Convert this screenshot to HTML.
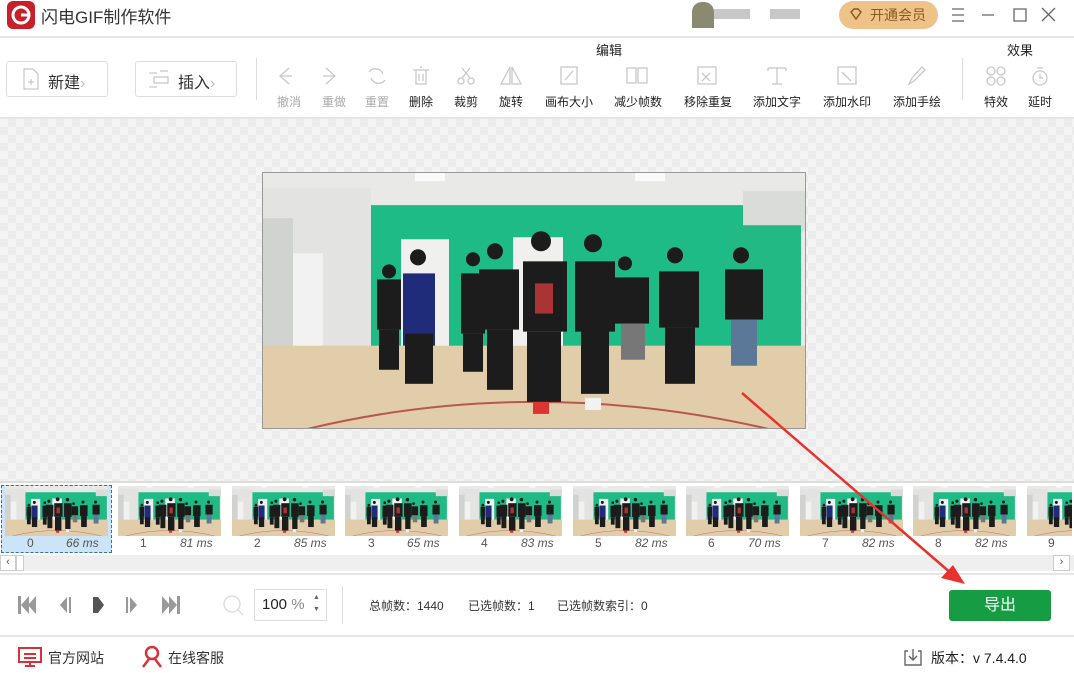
<!DOCTYPE html><html><head><meta charset="utf-8"><style>
*{margin:0;padding:0;box-sizing:border-box}
body{width:1074px;height:673px;overflow:hidden;background:#fff;font-family:"Liberation Sans","Noto Sans CJK SC",sans-serif;position:relative;color:#333}
.a{position:absolute}
.t{position:absolute;font-size:12px;white-space:nowrap;transform:translateX(-50%);color:#222}
.g{color:#aaa}
.th{position:absolute;top:486px;width:103px;height:50px}
.lb{position:absolute;top:536px;font-size:12px;color:#555}
.lb i{font-style:italic}
</style></head><body>
<svg width="0" height="0" style="position:absolute"><defs>
<symbol id="sc" viewBox="0 0 544 256" preserveAspectRatio="none">
<rect width="544" height="256" fill="#e9e9e7"/>
<rect x="0" y="15" width="108" height="165" fill="#e3e3e1"/>
<rect x="0" y="45" width="30" height="150" fill="#d0d3d0"/>
<rect x="30" y="80" width="30" height="110" fill="#f2f2f2"/>
<rect x="108" y="32" width="372" height="143" fill="#1fbb86"/>
<rect x="138" y="66" width="48" height="110" fill="#f0f0ee"/>
<rect x="250" y="64" width="50" height="110" fill="#f0f0ee"/>
<rect x="480" y="18" width="64" height="40" fill="#dadcda"/>
<rect x="466" y="52" width="72" height="130" fill="#22b984"/>
<rect x="152" y="0" width="30" height="8" fill="#fafafa"/><rect x="372" y="0" width="30" height="8" fill="#fafafa"/>
<rect x="0" y="172" width="544" height="84" fill="#e1cdaa"/>
<path d="M40 256 Q270 200 510 256" stroke="#b8584a" stroke-width="2" fill="none"/>
<g fill="#1c1c1c">
<circle cx="126" cy="98" r="7"/><rect x="114" y="106" width="24" height="50"/><rect x="116" y="156" width="20" height="40"/>
<circle cx="155" cy="84" r="8"/><rect x="140" y="100" width="32" height="72" fill="#1f2c7a"/><rect x="142" y="160" width="28" height="50"/>
<circle cx="210" cy="86" r="7"/><rect x="198" y="100" width="24" height="60"/><rect x="200" y="160" width="20" height="38"/>
<circle cx="232" cy="78" r="8"/><rect x="216" y="96" width="40" height="60"/><rect x="224" y="156" width="26" height="60"/>
<circle cx="278" cy="68" r="10"/><rect x="260" y="88" width="44" height="70"/><rect x="264" y="158" width="34" height="70"/>
<circle cx="330" cy="70" r="9"/><rect x="312" y="88" width="40" height="70"/><rect x="318" y="156" width="28" height="64"/>
<circle cx="362" cy="90" r="7"/><rect x="352" y="104" width="34" height="46"/><rect x="358" y="150" width="24" height="36" fill="#777"/>
<circle cx="412" cy="82" r="8"/><rect x="396" y="98" width="40" height="56"/><rect x="402" y="154" width="30" height="56"/>
<circle cx="478" cy="82" r="8"/><rect x="462" y="96" width="38" height="50"/><rect x="468" y="146" width="26" height="46" fill="#5c7898"/>
</g>
<rect x="272" y="110" width="18" height="30" fill="#a33"/>
<rect x="270" y="228" width="16" height="12" fill="#d33"/><rect x="322" y="224" width="16" height="12" fill="#f2f2f2"/>
</symbol></defs></svg>

<div class="a" style="left:7px;top:1px;width:28px;height:28px;border-radius:6px;background:#c8202a"></div>
<svg class="a" style="left:7px;top:1px" width="28" height="28"><circle cx="14" cy="14" r="8" fill="none" stroke="#fff" stroke-width="3"/><path d="M14 14h8" stroke="#fff" stroke-width="3"/></svg>
<div class="a" style="left:41px;top:3px;font-size:17px;color:#333">闪电GIF制作软件</div>
<div class="a" style="left:692px;top:2px;width:22px;height:26px;background:#8a8a70;border-radius:10px 10px 0 0"></div>
<div class="a" style="left:714px;top:9px;width:36px;height:10px;background:#c8c8c8"></div>
<div class="a" style="left:770px;top:9px;width:30px;height:10px;background:#c8c8c8"></div>
<div class="a" style="left:839px;top:1px;width:99px;height:28px;border-radius:14px;background:#efc28a;color:#8a5a1e;font-size:14px;line-height:28px;padding-left:31px">开通会员</div>
<svg class="a" style="left:848px;top:7px" width="16" height="16"><path d="M3 5l3-3h4l3 3-5 7z" fill="none" stroke="#8a5a1e" stroke-width="1.5"/></svg>
<svg class="a" style="left:950px;top:6px" width="110" height="18" fill="none" stroke="#666" stroke-width="1.3"><path d="M2 3h12M2 9h12M2 15h12M32 9h12M64 3h12v12h-12zM92 2l13 13M105 2l-13 13"/></svg>
<div class="a" style="left:0;top:36px;width:1074px;height:2px;background:#e6e6e6"></div>

<div class="a" style="left:6px;top:61px;width:102px;height:36px;border:1px solid #ddd;border-radius:3px"></div>
<svg class="a" style="left:21px;top:68px" width="20" height="22" fill="none" stroke="#bbb"><path d="M3 1h9l5 5v15H3zM7 14h6M10 11v6"/></svg>
<div class="a" style="left:48px;top:69px;font-size:16px">新建<span style="color:#bbb">›</span></div>
<div class="a" style="left:135px;top:61px;width:102px;height:36px;border:1px solid #ddd;border-radius:3px"></div>
<svg class="a" style="left:148px;top:69px" width="24" height="20" fill="none" stroke="#bbb"><path d="M1 4h8M6 8h14v6H6zM1 18h8M12 2h8"/></svg>
<div class="a" style="left:178px;top:69px;font-size:16px">插入<span style="color:#bbb">›</span></div>
<div class="a" style="left:256px;top:58px;width:1px;height:42px;background:#ddd"></div>
<div class="a" style="left:962px;top:58px;width:1px;height:42px;background:#ddd"></div>
<div class="t" style="left:609px;top:40px;font-size:13px">编辑</div>
<div class="t" style="left:1020px;top:40px;font-size:13px">效果</div>
<svg class="a" style="left:270px;top:64px" width="790" height="24" fill="none" stroke="#c8c8c8" stroke-width="1.3">
<path d="M19 4l-9 8 9 8M10 12h12"/>
<path d="M56 4l9 8-9 8M65 12h-12"/>
<path d="M99 8a8 8 0 0 1 14 2M115 16a8 8 0 0 1-14-2"/>
<path d="M143 6h16M146 6v14h10V6M150 3h2M149 10v7M153 10v7"/>
<circle cx="191" cy="17" r="3"/><circle cx="201" cy="17" r="3"/><path d="M192 14l8-10M200 14l-8-10"/>
<path d="M240 3v17h-9zM242 3v17h9z"/>
<path d="M291 3h16v17h-16zM295 16l8-9"/>
<path d="M357 4h9v15h-9zM368 4h9v15h-9z"/>
<path d="M428 3h18v17h-18zM432 9l8 8M440 9l-8 8"/>
<path d="M498 4h18M507 4v16M502 20h10M498 4v3M516 4v3"/>
<path d="M568 3h18v17h-18zM572 8l9 9"/>
<path d="M639 20l3-6 10-11 3 3-11 11z"/>
<circle cx="721" cy="7" r="4"/><circle cx="731" cy="7" r="4"/><circle cx="721" cy="17" r="4"/><circle cx="731" cy="17" r="4"/>
<circle cx="770" cy="14" r="7"/><path d="M770 10v4h3M767 4h6"/>
</svg>
<div class="t g" style="left:289px;top:93px">撤消</div>
<div class="t g" style="left:334px;top:93px">重做</div>
<div class="t g" style="left:377px;top:93px">重置</div>
<div class="t" style="left:421px;top:93px">删除</div>
<div class="t" style="left:466px;top:93px">裁剪</div>
<div class="t" style="left:511px;top:93px">旋转</div>
<div class="t" style="left:569px;top:93px">画布大小</div>
<div class="t" style="left:638px;top:93px">减少帧数</div>
<div class="t" style="left:708px;top:93px">移除重复</div>
<div class="t" style="left:777px;top:93px">添加文字</div>
<div class="t" style="left:847px;top:93px">添加水印</div>
<div class="t" style="left:917px;top:93px">添加手绘</div>
<div class="t" style="left:996px;top:93px">特效</div>
<div class="t" style="left:1040px;top:93px">延时</div>
<div class="a" style="left:0;top:117px;width:1074px;height:2px;background:#e6e6e6"></div>

<div class="a" style="left:0;top:119px;width:1074px;height:362px;background-color:#f4f4f4;background-image:linear-gradient(45deg,#ececec 25%,transparent 25%,transparent 75%,#ececec 75%),linear-gradient(45deg,#ececec 25%,transparent 25%,transparent 75%,#ececec 75%);background-size:16px 16px;background-position:0 0,8px 8px"></div>
<svg class="a" style="left:262px;top:172px;border:1px solid #999" width="544" height="257"><use href="#sc" width="544" height="257"/></svg>

<div class="a" style="left:0;top:481px;width:1074px;height:2px;background:#ddd"></div>
<div class="a" style="left:1px;top:485px;width:111px;height:68px;background:#cce4f7;border:1px dashed #3a6ea5"></div>
<svg class="th" style="left:5px"><use href="#sc" width="103" height="50"/></svg>
<svg class="th" style="left:118px"><use href="#sc" width="103" height="50"/></svg>
<svg class="th" style="left:232px"><use href="#sc" width="103" height="50"/></svg>
<svg class="th" style="left:345px"><use href="#sc" width="103" height="50"/></svg>
<svg class="th" style="left:459px"><use href="#sc" width="103" height="50"/></svg>
<svg class="th" style="left:573px"><use href="#sc" width="103" height="50"/></svg>
<svg class="th" style="left:686px"><use href="#sc" width="103" height="50"/></svg>
<svg class="th" style="left:800px"><use href="#sc" width="103" height="50"/></svg>
<svg class="th" style="left:913px"><use href="#sc" width="103" height="50"/></svg>
<svg class="th" style="left:1027px;width:45px"><use href="#sc" width="103" height="50"/></svg>
<div class="lb" style="left:27px">0</div><div class="lb" style="left:66px"><i>66 ms</i></div>
<div class="lb" style="left:140px">1</div><div class="lb" style="left:180px"><i>81 ms</i></div>
<div class="lb" style="left:254px">2</div><div class="lb" style="left:294px"><i>85 ms</i></div>
<div class="lb" style="left:368px">3</div><div class="lb" style="left:407px"><i>65 ms</i></div>
<div class="lb" style="left:481px">4</div><div class="lb" style="left:521px"><i>83 ms</i></div>
<div class="lb" style="left:595px">5</div><div class="lb" style="left:635px"><i>82 ms</i></div>
<div class="lb" style="left:708px">6</div><div class="lb" style="left:748px"><i>70 ms</i></div>
<div class="lb" style="left:822px">7</div><div class="lb" style="left:862px"><i>82 ms</i></div>
<div class="lb" style="left:935px">8</div><div class="lb" style="left:975px"><i>82 ms</i></div>
<div class="lb" style="left:1048px">9</div>
<div class="a" style="left:0;top:555px;width:1074px;height:16px;background:#efefef"></div>
<div class="a" style="left:0;top:555px;width:16px;height:16px;background:#fff;border:1px solid #ccc;font-size:11px;text-align:center;line-height:13px;color:#555">‹</div>
<div class="a" style="left:16px;top:555px;width:8px;height:16px;background:#fff;border:1px solid #ccc"></div>
<div class="a" style="left:1053px;top:555px;width:17px;height:16px;background:#fff;border:1px solid #ccc;font-size:11px;text-align:center;line-height:13px;color:#555">›</div>
<div class="a" style="left:0;top:573px;width:1074px;height:2px;background:#e6e6e6"></div>

<svg class="a" style="left:15px;top:593px" width="170" height="24">
<path d="M3 3h3v18H3zM6 12l8-9v18zM13 12l8-9v18z" fill="#999"/>
<path d="M45 12l7-8v16zM54 4h2v16h-2z" fill="#999"/>
<path d="M78 4h5l6 8-6 8h-5z" fill="#555"/>
<path d="M111 4h2v16h-2zM115 4l7 8-7 8z" fill="#999"/>
<path d="M147 3l8 9-8 9zM154 3l8 9-8 9zM162 3h3v18h-3z" fill="#999"/>
</svg>
<svg class="a" style="left:222px;top:594px" width="24" height="24" fill="none" stroke="#ddd" stroke-width="1.5"><circle cx="10" cy="10" r="8"/><path d="M16 16l5 5"/></svg>
<div class="a" style="left:254px;top:589px;width:73px;height:32px;border:1px solid #ddd"></div>
<div class="a" style="left:262px;top:596px;font-size:15px;color:#222">100 <span style="color:#888">%</span></div>
<div class="a" style="left:313px;top:592px;font-size:7px;color:#666;line-height:12px">▲<br>▼</div>
<div class="a" style="left:342px;top:586px;width:1px;height:38px;background:#e0e0e0"></div>
<div class="a" style="left:369px;top:597px;font-size:12px;color:#333">总帧数：1440</div>
<div class="a" style="left:468px;top:597px;font-size:12px;color:#333">已选帧数：1</div>
<div class="a" style="left:557px;top:597px;font-size:12px;color:#333">已选帧数索引：0</div>
<div class="a" style="left:949px;top:590px;width:102px;height:31px;background:#169c43;border-radius:3px;color:#fff;font-size:16px;text-align:center;line-height:31px">导出</div>
<div class="a" style="left:0;top:635px;width:1074px;height:2px;background:#e6e6e6"></div>

<svg class="a" style="left:17px;top:646px" width="26" height="22" fill="none" stroke="#d9303a" stroke-width="2"><path d="M2 2h22v14H2zM7 8h12M7 12h12M13 16v4M8 20h10"/></svg>
<div class="a" style="left:48px;top:648px;font-size:14px">官方网站</div>
<svg class="a" style="left:141px;top:645px" width="22" height="24" fill="none" stroke="#d9303a" stroke-width="2.5"><circle cx="11" cy="8" r="6"/><path d="M2 22l6-8M20 22l-6-8"/></svg>
<div class="a" style="left:168px;top:648px;font-size:14px">在线客服</div>
<svg class="a" style="left:903px;top:647px" width="20" height="20" fill="none" stroke="#666" stroke-width="1.4"><path d="M5 4H2v14h16V4h-3M10 2v11M6 9l4 4 4-4"/></svg>
<div class="a" style="left:931px;top:648px;font-size:14px;color:#222">版本：v 7.4.4.0</div>

<svg class="a" style="left:0;top:0" width="1074" height="673"><path d="M742 393L952 574" stroke="#e8322e" stroke-width="2.5"/><path d="M965 584l-24-6 12-13z" fill="#e8322e"/></svg>
</body></html>
